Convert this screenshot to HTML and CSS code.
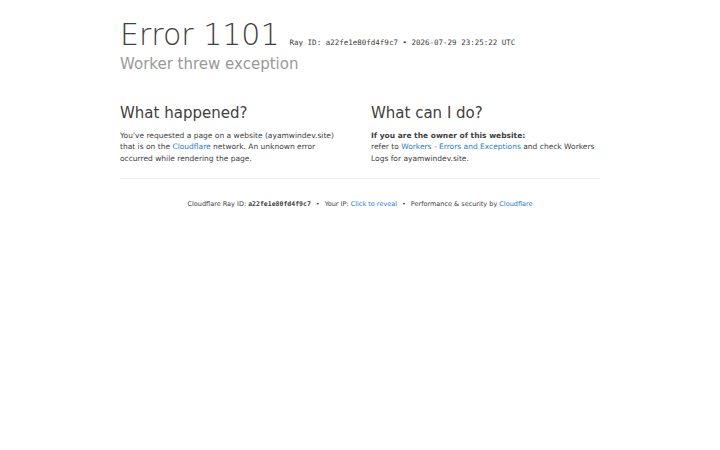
FILE: index.html
```html
<!DOCTYPE html>
<html>
<head>
<meta charset="utf-8">
<link rel="stylesheet" href="styles.css">
</head>
<body>
<div class="wrap">
  <header class="head">
    <h1 class="title"><span class="code">Error 1101</span><span class="ray">Ray ID: a22fe1e80fd4f9c7 &bull; 2026-07-29 23:25:22 UTC</span></h1>
    <h2 class="sub">Worker threw exception</h2>
  </header>
  <section class="cols">
    <div class="col col-left">
      <h2 class="h">What happened?</h2>
      <p class="p">You've requested a page on a website (ayamwindev.site) that is on the <a class="lnk">Cloudflare</a> network. An unknown error occurred while rendering the page.</p>
    </div>
    <div class="col col-right">
      <h2 class="h">What can I do?</h2>
      <p class="p"><strong>If you are the owner of this website:</strong><br>refer to <a class="lnk">Workers - Errors and Exceptions</a> and check Workers Logs for ayamwindev.site.</p>
    </div>
  </section>
  <footer class="foot">
    Cloudflare Ray ID: <strong class="mono">a22fe1e80fd4f9c7</strong><span class="sep">&bull;</span>Your IP: <a class="lnk">Click to reveal</a><span class="sep">&bull;</span>Performance &amp; security by <a class="lnk">Cloudflare</a>
  </footer>
</div>
</body>
</html>
```
FILE: styles.css
```css
html, body { margin: 0; padding: 0; background: #fff; }
body { font-family: "DejaVu Sans", sans-serif; color: #404040; }
.wrap { width: 480px; margin: 0 auto; padding-top: 22px; }
.title { margin: 0; font-weight: 200; font-size: 30px; line-height: 25px; color: #404040; display: flex; align-items: baseline; }
.code { font-family: "DejaVu Sans ExtraLight", "DejaVu Sans", sans-serif; font-weight: 200; }
.ray { font-family: "DejaVu Sans Mono", monospace; font-size: 7.5px; font-weight: normal; margin-left: 10px; color: #404040; }
.sub { margin: 0; font-weight: normal; font-size: 15px; line-height: 18px; color: #999; }
.cols { display: grid; grid-template-columns: 251px 1fr; margin-top: 31px; padding-bottom: 14px; border-bottom: 1px solid #eee; }
.col-left { padding-right: 22px; }
.col-right { padding-right: 2px; }
.h { margin: 0; font-weight: normal; font-size: 15px; line-height: 18px; color: #404040; }
.p { margin: 8px 0 0; font-size: 7.5px; line-height: 11.25px; color: #404040; }
.p strong { font-weight: bold; }
.lnk { color: #2f7bbf; text-decoration: none; }
.foot { text-align: center; font-size: 6.5px; line-height: 10px; padding-top: 20px; color: #404040; }
.mono { font-family: "DejaVu Sans Mono", monospace; font-weight: bold; }
.sep { margin: 0 5px; }
```
